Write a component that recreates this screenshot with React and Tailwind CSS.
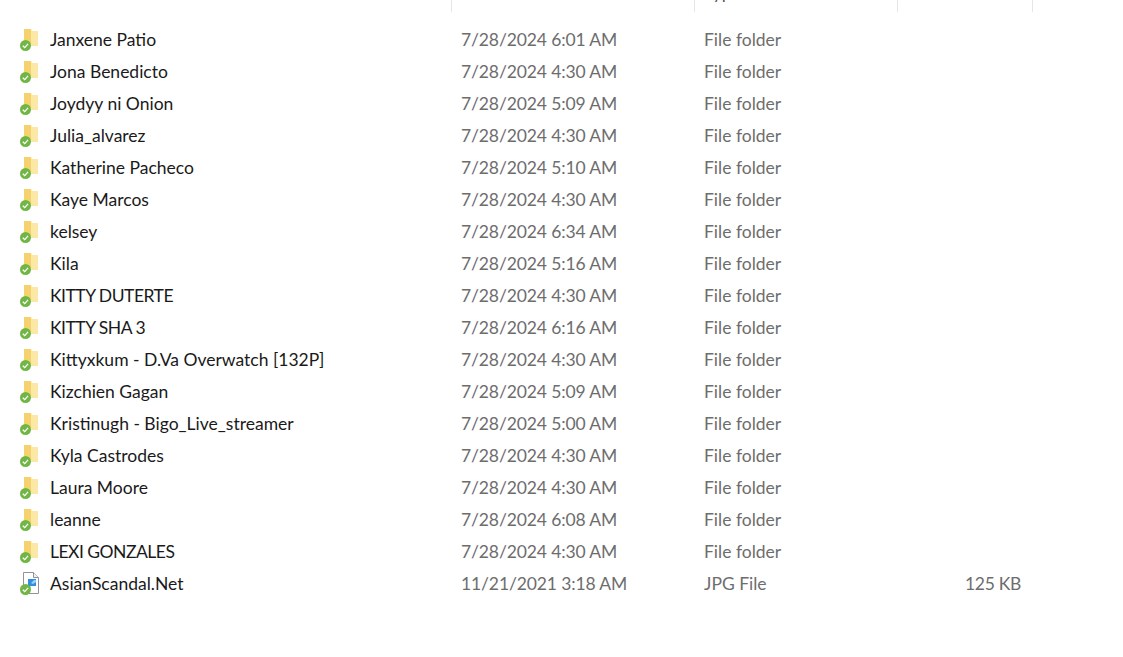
const rows = [
  ['Janxene Patio', '7/28/2024 6:01 AM'],
  ['Jona Benedicto', '7/28/2024 4:30 AM'],
  ['Joydyy ni Onion', '7/28/2024 5:09 AM'],
  ['Julia_alvarez', '7/28/2024 4:30 AM'],
  ['Katherine Pacheco', '7/28/2024 5:10 AM'],
  ['Kaye Marcos', '7/28/2024 4:30 AM'],
  ['kelsey', '7/28/2024 6:34 AM'],
  ['Kila', '7/28/2024 5:16 AM'],
  ['KITTY DUTERTE', '7/28/2024 4:30 AM', true],
  ['KITTY SHA 3', '7/28/2024 6:16 AM', true],
  ['Kittyxkum - D.Va Overwatch [132P]', '7/28/2024 4:30 AM'],
  ['Kizchien Gagan', '7/28/2024 5:09 AM'],
  ['Kristinugh - Bigo_Live_streamer', '7/28/2024 5:00 AM'],
  ['Kyla Castrodes', '7/28/2024 4:30 AM'],
  ['Laura Moore', '7/28/2024 4:30 AM'],
  ['leanne', '7/28/2024 6:08 AM'],
  ['LEXI GONZALES', '7/28/2024 4:30 AM', true],
];

const Sync = () => (
  <svg viewBox="0 0 11 11" className="absolute left-[2px] top-[12px] w-[11px] h-[11px]">
    <circle cx="5.5" cy="5.5" r="5.5" fill="#6fb644" />
    <path d="M2.8 5.7l1.9 1.9 3.4-3.7" fill="none" stroke="#fff" strokeWidth="1.3" />
  </svg>
);

const FolderIcon = () => (
  <div className="relative w-[24px] h-[24px] shrink-0">
    <svg viewBox="0 0 24 24" className="absolute inset-0 w-full h-full">
      <path d="M6 1h7l1 2h6v15H6z" fill="#fbe59a" />
      <path d="M6 1h7v15l-7 2z" fill="#f4d36f" />
      <path d="M13 3h7v15h-7z" fill="#fbe8a4" />
    </svg>
    <Sync />
  </div>
);

const FileIcon = () => (
  <div className="relative w-[24px] h-[24px] shrink-0">
    <svg viewBox="0 0 24 24" className="absolute inset-0 w-full h-full">
      <path d="M5.5 0.5h10l5 5v16h-15z" fill="#fff" stroke="#8f949a" />
      <path d="M15.5 0.5v5h5" fill="#eef0f2" stroke="#8f949a" />
      <path d="M10 7h8v7h-5l-3 2z" fill="#2f8fdc" />
      <path d="M13 11l3-3h2v2l-3 2z" fill="#9ad0f5" />
    </svg>
    <Sync />
  </div>
);

function Row({ name, date, type, size, icon, caps }) {
  return (
    <div className="flex items-center h-8">
      <div className="w-[452px] shrink-0 flex items-center pl-[18px] gap-[8px] text-[#1a1a1a]">
        {icon}
        <span className={caps ? 'whitespace-nowrap tracking-[-0.5px]' : 'whitespace-nowrap'}>{name}</span>
      </div>
      <div className="w-[243px] shrink-0 pl-[9px] tracking-[-0.12px] text-[#6d6d6d]">{date}</div>
      <div className="w-[203px] shrink-0 pl-[9px] text-[#6d6d6d]">{type}</div>
      <div className="w-[135px] shrink-0 pr-[12px] tracking-[-0.3px] text-right text-[#6d6d6d]">{size}</div>
    </div>
  );
}

export default function App() {
  return (
    <div className="w-[1123px] h-[657px] bg-white overflow-hidden text-[17.5px] font-['Lato','Noto_Sans',sans-serif]">
      {/* column header, scrolled mostly out of view */}
      <div className="flex h-[12px] overflow-hidden">
        <div className="w-[452px] border-r border-[#e5e5e5] shrink-0" />
        <div className="w-[243px] border-r border-[#e5e5e5] shrink-0" />
        <div className="w-[203px] border-r border-[#e5e5e5] shrink-0 pl-[9px] text-[#555] leading-[20px] -mt-[17px]">Type</div>
        <div className="w-[135px] border-r border-[#e5e5e5] shrink-0" />
      </div>
      <div className="mt-[12px]">
        {rows.map(([name, date, caps]) => (
          <Row key={name} name={name} date={date} caps={caps} type="File folder" icon={<FolderIcon />} />
        ))}
        <Row name="AsianScandal.Net" date="11/21/2021 3:18 AM" type="JPG File" size="125 KB" icon={<FileIcon />} />
      </div>
    </div>
  );
}
